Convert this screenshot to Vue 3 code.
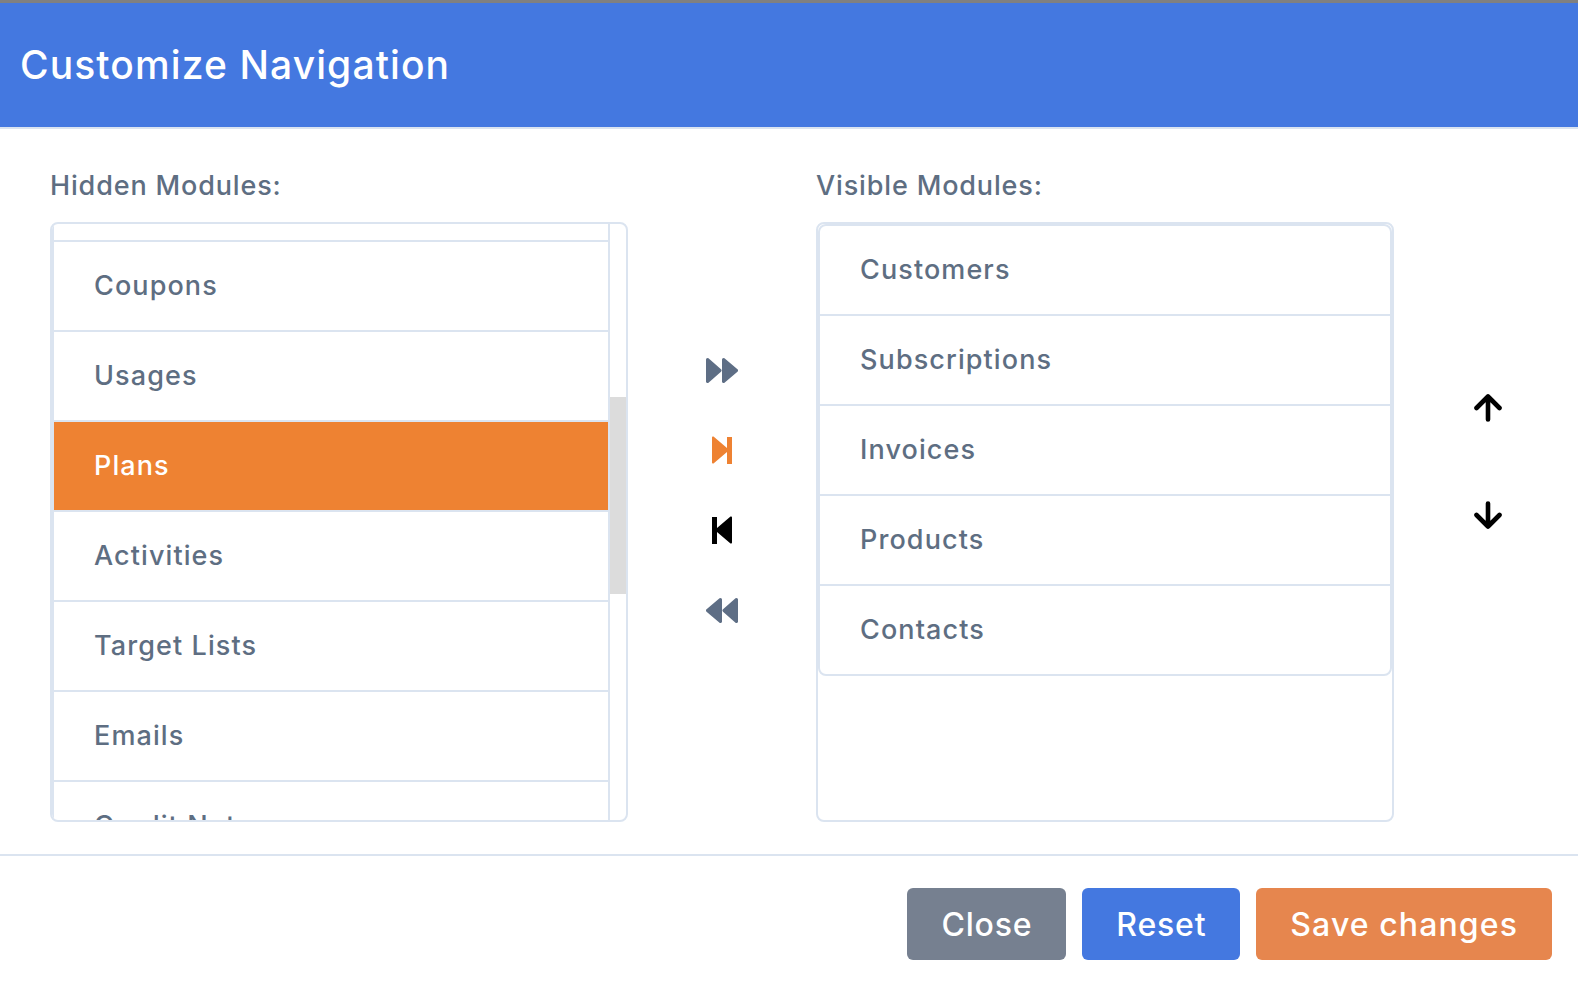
<script setup>
const hidden = ['Coupons', 'Usages', 'Plans', 'Activities', 'Target Lists', 'Emails', 'Credit Notes']
const visible = ['Customers', 'Subscriptions', 'Invoices', 'Products', 'Contacts']
</script>

<template>
  <div class="modal">
    <header class="head"><h1>Customize Navigation</h1></header>
    <main class="body">
      <section class="col">
        <label>Hidden Modules:</label>
        <div class="box hidden-box">
          <ul class="list">
            <li class="spacer"></li>
            <li v-for="m in hidden" :key="m" :class="{ active: m === 'Plans' }">{{ m }}</li>
          </ul>
          <div class="track"><div class="thumb"></div></div>
        </div>
      </section>
      <div class="moves">
        <button class="ico" aria-label="Move all right">
          <svg width="32" height="25" viewBox="0 0 32 25"><path fill="#5e6e85" stroke="#5e6e85" stroke-width="3" stroke-linejoin="round" d="M1.500 1.500 14 12.500 1.500 23.500ZM17.500 1.500 30.500 12.500 17.500 23.500Z"/></svg>
        </button>
        <button class="ico" aria-label="Move right">
          <svg width="20" height="28" viewBox="0 0 20 28"><path fill="#ee8232" d="M0 1.500Q0 0 1.500 .6L15 12V1h5v27h-5V16L1.500 27.400Q0 28 0 26.500Z"/></svg>
        </button>
        <button class="ico" aria-label="Move left">
          <svg width="20" height="28" viewBox="0 0 20 28"><path fill="#000" d="M20 1.500Q20 0 18.500 .6L5 12V1H0v27h5V16l13.500 11.400Q20 28 20 26.500Z"/></svg>
        </button>
        <button class="ico" aria-label="Move all left">
          <svg width="32" height="25" viewBox="0 0 32 25"><path fill="#5e6e85" stroke="#5e6e85" stroke-width="3" stroke-linejoin="round" d="M30.500 1.500 18 12.500 30.500 23.500ZM14.500 1.500 1.500 12.500 14.500 23.500Z"/></svg>
        </button>
      </div>
      <section class="col">
        <label>Visible Modules:</label>
        <div class="box">
          <ul class="list inner">
            <li v-for="m in visible" :key="m">{{ m }}</li>
          </ul>
        </div>
      </section>
      <div class="order">
        <button class="ico small" aria-label="Up">
          <svg width="28" height="28" viewBox="0 0 28 28"><path fill="none" stroke="#000" stroke-width="4.600" stroke-linecap="round" stroke-linejoin="round" d="M14 25.500V2.500M2.500 14 14 2.500 25.500 14"/></svg>
        </button>
        <button class="ico small" aria-label="Down">
          <svg width="28" height="28" viewBox="0 0 28 28"><path fill="none" stroke="#000" stroke-width="4.600" stroke-linecap="round" stroke-linejoin="round" d="M14 2.500V25.500M2.500 14 14 25.500 25.500 14"/></svg>
        </button>
      </div>
    </main>
    <footer class="foot">
      <button class="btn gray">Close</button>
      <button class="btn blue">Reset</button>
      <button class="btn orange">Save changes</button>
    </footer>
  </div>
</template>

<style scoped>
.modal {
  width: 1578px;
  height: 982px;
  background: #fff;
  overflow: hidden;
  font-family: Inter, "Open Sans", sans-serif;
  color: #5e6e82;
}
.head {
  height: 122px;
  margin-top: 3px;
  padding-bottom: 2px;
  background: #4478e0;
  border-bottom: 2px solid #dbe4f0;
  display: flex;
  align-items: center;
  padding-left: 20px;
  box-shadow: 0 -3px 0 #808080;
}
h1 {
  margin: 0;
  font-size: 39px;
  font-weight: 450;
  letter-spacing: 1.1px;
  color: #fff;
}
.body {
  display: flex;
  padding: 0 0 0 50px;
  height: 725px;
  border-bottom: 2px solid #dbe4f0;
  box-sizing: content-box;
}
.col {
  width: 578px;
  flex: none;
}
label {
  display: block;
  height: 93px;
  line-height: 114px;
  font-size: 27px;
  font-weight: 450;
  letter-spacing: 0.85px;
}
.box {
  height: 600px;
  box-sizing: border-box;
  border: 2px solid #dbe4f0;
  border-radius: 8px;
  overflow: hidden;
  position: relative;
}
.list {
  list-style: none;
  margin: 0;
  padding: 0;
  border-left: 2px solid #dbe4f0;
  margin-right: 16px;
  border-right: 2px solid #dbe4f0;
}
.list li {
  height: 90px;
  box-sizing: border-box;
  border-bottom: 2px solid #dbe4f0;
  padding-left: 40px;
  line-height: 88px;
  font-size: 27px;
  font-weight: 450;
  letter-spacing: 1.1px;
}
.list li.spacer {
  height: 18px;
}
.list li.active {
  background: #ee8232;
  color: #fff;
}
.inner {
  margin: 0;
  border: 2px solid #dbe4f0;
  border-radius: 8px;
}
.inner li:last-child {
  border-bottom: 0;
  height: 88px;
}
.track {
  position: absolute;
  top: 0;
  right: 0;
  bottom: 0;
  width: 16px;
}
.thumb {
  margin-top: 173px;
  height: 197px;
  background: #dcdcdc;
}
.moves {
  width: 188px;
  flex: none;
  display: flex;
  flex-direction: column;
  align-items: center;
  padding-top: 201px;
}
.ico {
  height: 80px;
  width: 60px;
  padding: 0;
  border: 0;
  background: none;
  display: flex;
  align-items: center;
  justify-content: center;
}
.order {
  width: 188px;
  flex: none;
  display: flex;
  flex-direction: column;
  align-items: center;
  gap: 27px;
  padding-top: 239px;
}
.foot {
  display: flex;
  justify-content: flex-end;
  gap: 16px;
  padding: 32px 26px 0 0;
}
.btn {
  height: 72px;
  border: 0;
  border-radius: 6px;
  color: #fff;
  font-family: inherit;
  font-size: 32px;
  font-weight: 450;
  letter-spacing: 0.8px;
  padding: 0 34px;
}
.gray { background: #768090; }
.blue { background: #4478e0; }
.orange { background: #e6864e; letter-spacing: 1.1px; }
</style>
